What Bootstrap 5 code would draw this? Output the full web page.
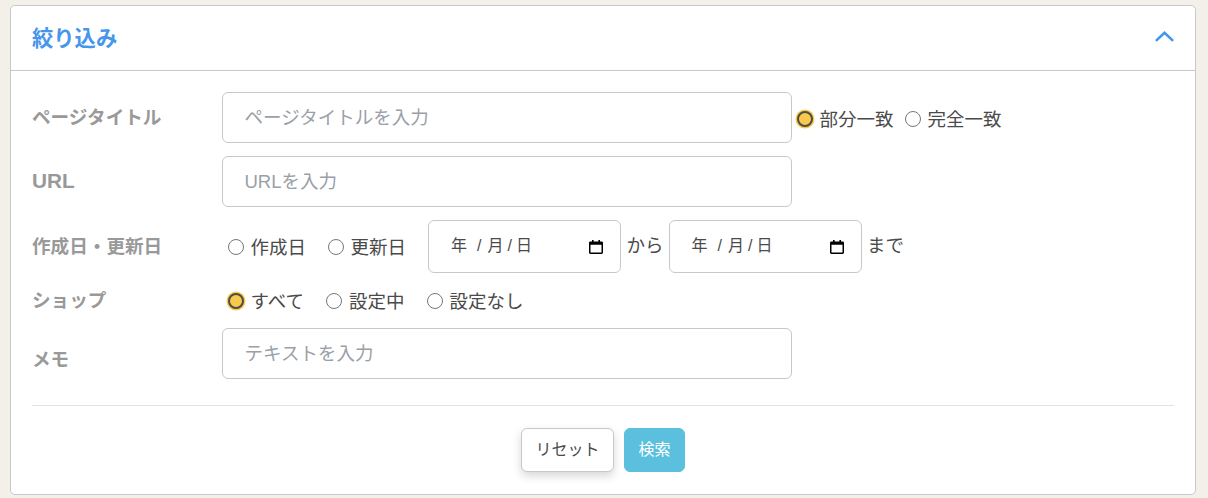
<!DOCTYPE html>
<html lang="ja">
<head>
<meta charset="utf-8">
<title>絞り込み</title>
<link href="https://cdn.jsdelivr.net/npm/bootstrap@5.3.0/dist/css/bootstrap.min.css" rel="stylesheet">
<style>
html,body{height:498px;overflow:hidden}
body{background:#f3f0ea;font-family:"Liberation Sans","Noto Sans CJK JP",sans-serif;color:#4a4a4a;padding:5px 12px 0 10px;font-size:18.5px}
.panel{border:1px solid #c8c8c8;border-radius:5px;height:490px;background:#fff}
.panel-head{height:65px;padding:0 21px;border-bottom:1px solid #c8c8c8;background:#fff;border-radius:5px 5px 0 0}
.panel-title{font-size:21.3px;font-weight:700;color:#4696ec;margin:0;padding-top:4px}
.chev{margin-bottom:4px}
.panel-body{padding:21px 21px 0}
.rows{gap:13px}
.fname{width:190px;flex:none;color:#999;font-weight:700;font-size:18.6px;line-height:1.2;padding-top:2px}
.fname-url{font-size:20.8px;padding-top:0}
.fname-low{padding-top:14px}
.tinput.form-control{width:570px;height:51px;flex:none;font-size:18.5px;padding:0 21.500px;border-color:#c8c8cc;border-radius:6px;color:#444}
.tinput.form-control::placeholder{color:#9aa0a8;opacity:1}
.rowh{min-height:29px}
.opts{margin-left:6px;gap:22px}
.opts-wide{gap:22.500px}
.opts-tight{margin-left:5px;margin-top:2px;gap:11.500px}
.opt{display:flex;align-items:center;margin:0;line-height:1;cursor:pointer}
.opt span{padding-top:3px}
.opt .form-check-input{width:16px;height:16px;margin:0 6.500px 0 0;flex:none;border:1.5px solid #777;background-color:#fff;float:none}
.opt .form-check-input:checked{background-color:#f9c94c;background-image:none;border:2px solid #4c4c4c;box-shadow:0 0 0 1.5px #f9c94c}
.fdate{width:193px;height:53px;flex:none;border:1px solid #c8c8cc;border-radius:6px;padding:0 17px 0 22px;font-size:16px;color:#4a4a4a;background:#fff}
.dparts{gap:4px;padding-bottom:2px}
.dgap{margin-left:6px}
.dmid{margin-left:2px}
.ml-date{margin-left:22px}
.txt-from{margin:0 5px 0 5.500px;padding-bottom:2px}
.txt-to{margin-left:5.500px;padding-bottom:2px}
.hline{margin:26px 0 22px;border-top:1px solid #e3e3e3;opacity:1}
.btnrow{gap:10px}
.btn-reset.btn{width:93px;height:44px;padding:0;font-size:16px;color:#4a4a4a;background:#fff;border:1px solid #c8c8c8;border-radius:6px;box-shadow:0 4px 10px rgba(0,0,0,.16)}
.btn-find.btn{width:61px;height:44px;padding:0;font-size:16px;color:#fff;background:#5bc0de;border:1px solid #5bc0de;border-radius:6px}
</style>
</head>
<body>
<div class="panel">
  <div class="panel-head d-flex align-items-center justify-content-between">
    <h2 class="panel-title">絞り込み</h2>
    <svg class="chev" width="19" height="11" viewBox="0 0 19 11" fill="none" stroke="#4696ec" stroke-width="2.6" aria-hidden="true"><path d="M.9 9.900 9.500 1.800l8.600 8.100"/></svg>
  </div>
  <form class="panel-body">
    <div class="rows d-flex flex-column">
      <div class="d-flex align-items-center">
        <div class="fname">ページタイトル</div>
        <input class="form-control tinput" type="text" placeholder="ページタイトルを入力">
        <div class="d-flex align-items-center opts-tight">
          <label class="opt"><input class="form-check-input" type="radio" name="m" checked><span>部分一致</span></label>
          <label class="opt"><input class="form-check-input" type="radio" name="m"><span>完全一致</span></label>
        </div>
      </div>
      <div class="d-flex align-items-center">
        <div class="fname fname-url">URL</div>
        <input class="form-control tinput" type="text" placeholder="URLを入力">
      </div>
      <div class="d-flex align-items-center">
        <div class="fname">作成日・更新日</div>
        <div class="d-flex align-items-center opts">
          <label class="opt"><input class="form-check-input" type="radio" name="d"><span>作成日</span></label>
          <label class="opt"><input class="form-check-input" type="radio" name="d"><span>更新日</span></label>
        </div>
        <div class="fdate d-flex align-items-center justify-content-between ml-date">
          <span class="dparts d-flex"><span>年</span><span class="dgap">/</span><span class="dmid">月</span><span>/</span><span>日</span></span>
          <svg width="14" height="14" viewBox="0 0 14 14" aria-hidden="true"><path fill="#000" d="M3 0h1.600v1.500h4.800V0H11v1.500h1.600c.8 0 1.400.6 1.400 1.400v9.700c0 .8-.6 1.400-1.400 1.400H1.400C.6 14 0 13.400 0 12.600V2.900c0-.8.6-1.400 1.400-1.400H3zM1.500 4.700v7.800h11V4.700z"/></svg>
        </div>
        <span class="txt-from">から</span>
        <div class="fdate d-flex align-items-center justify-content-between">
          <span class="dparts d-flex"><span>年</span><span class="dgap">/</span><span class="dmid">月</span><span>/</span><span>日</span></span>
          <svg width="14" height="14" viewBox="0 0 14 14" aria-hidden="true"><path fill="#000" d="M3 0h1.600v1.500h4.800V0H11v1.500h1.600c.8 0 1.400.6 1.400 1.400v9.700c0 .8-.6 1.400-1.400 1.400H1.400C.6 14 0 13.400 0 12.600V2.900c0-.8.6-1.400 1.400-1.400H3zM1.500 4.700v7.800h11V4.700z"/></svg>
        </div>
        <span class="txt-to">まで</span>
      </div>
      <div class="d-flex align-items-center rowh">
        <div class="fname">ショップ</div>
        <div class="d-flex align-items-center opts opts-wide">
          <label class="opt"><input class="form-check-input" type="radio" name="s" checked><span>すべて</span></label>
          <label class="opt"><input class="form-check-input" type="radio" name="s"><span>設定中</span></label>
          <label class="opt"><input class="form-check-input" type="radio" name="s"><span>設定なし</span></label>
        </div>
      </div>
      <div class="d-flex align-items-center">
        <div class="fname fname-low">メモ</div>
        <input class="form-control tinput" type="text" placeholder="テキストを入力">
      </div>
    </div>
    <hr class="hline">
    <div class="d-flex justify-content-center btnrow">
      <button type="button" class="btn btn-reset">リセット</button>
      <button type="button" class="btn btn-find">検索</button>
    </div>
  </form>
</div>
<script src="https://cdn.jsdelivr.net/npm/bootstrap@5.3.0/dist/js/bootstrap.bundle.min.js"></script>
</body>
</html>
